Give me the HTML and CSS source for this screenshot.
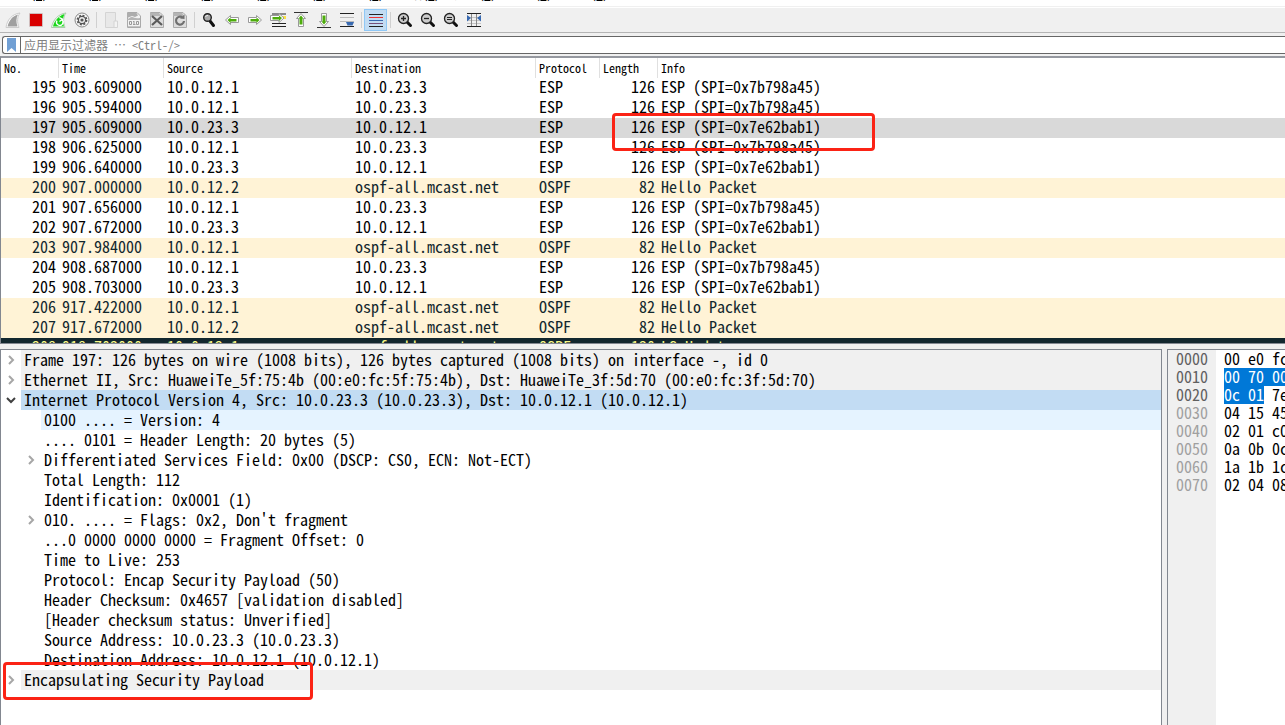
FILE: index.html
```html
<!DOCTYPE html>
<html lang="zh-CN">
<head>
<meta charset="utf-8">
<title>Wireshark</title>
<link rel="stylesheet" href="styles.css">
</head>
<body>
<nav class="menubar" aria-label="菜单">
  <button>文件(<u>F</u>)</button><button>编辑(<u>E</u>)</button><button>视图(<u>V</u>)</button><button>跳转(<u>G</u>)</button><button>捕获(<u>C</u>)</button><button>分析(<u>A</u>)</button><button>统计(<u>S</u>)</button><button>电话(<u>Y</u>)</button><button>无线(<u>W</u>)</button><button>工具(<u>T</u>)</button><button>帮助(<u>H</u>)</button>
</nav>

<div class="toolbar" role="toolbar">
  <button class="tool" aria-label="开始捕获"><svg viewBox="0 0 16 16"><path d="M1 15.500C2 8 7 2 15 1C12 5 12 10 14 15.500Z" fill="#fff" stroke="#ccc"/><path d="M2.500 14.500C4 8.500 7.500 4 13 2.500C11 6 11 10 12.500 14.500Z" fill="#a0a0a0"/></svg></button>
  <button class="tool" aria-label="停止捕获"><svg viewBox="0 0 16 16"><path d="M1.500 1.500H14.500V14.500H1.500Z" fill="#fff" stroke="#d0bcbc"/><path d="M2 2H14V14H2Z" fill="#d90000"/></svg></button>
  <button class="tool" aria-label="重新开始"><svg viewBox="0 0 16 16"><path d="M0.500 15.500C2 8 7 2 15 1C12 5 12 10 14 15.500Z" fill="#fff" stroke="#a9cba9"/><path d="M2 14.500C3.500 8.500 7.500 4 13.500 2C11.500 6 11.500 10 13 14.500Z" fill="#19d619"/><path d="M10.500 7.500A3.200 3.200 0 1 1 6 8.700M8.300 5.500L11.500 7.200L8.500 9.500" fill="none" stroke="#fff" stroke-width="1.400"/></svg></button>
  <button class="tool" aria-label="捕获选项"><svg viewBox="0 0 16 16"><circle cx="8" cy="8" r="7" fill="#f8f8f8" stroke="#888"/><circle cx="8" cy="8" r="4.200" fill="#555"/><circle cx="8" cy="8" r="4.600" fill="none" stroke="#555" stroke-width="1.600" stroke-dasharray="2 1.610"/><circle cx="8" cy="8" r="2.300" fill="#555" stroke="#eee" stroke-width="1.400"/></svg></button>
  <i class="sep"></i>
  <button class="tool" aria-label="打开"><svg viewBox="0 0 16 16"><path d="M2.500 .5H12.500V15.500H2.500Z" fill="#e8e8e8" stroke="#d4d4d4"/><path d="M11 9H14.500V15.500H11Z" fill="#f3f3f3" stroke="#d4d4d4"/></svg></button>
  <button class="tool" aria-label="保存"><svg viewBox="0 0 16 16"><path d="M1.500 .5H11L14.500 4V15.500H1.500Z" fill="#f2f2f2" stroke="#aaa"/><path d="M1 1H10.500L12 3.500L9 5L6 4L1 6Z" fill="#adadad"/><path d="M1 8V7C3 7 4 5 6 5C8 5 9 7 14 6V8Z" fill="#b5b5b5"/><g fill="none" stroke="#999"><path d="M3.500 9.500H5.500V12.500H3.500ZM8 9V13M7 9.500H8M7 12.500H9.500M10.500 9.500H12.500V12.500H10.500Z"/></g><path d="M2 14.500H14" stroke="#c4c4c4"/></svg></button>
  <button class="tool" aria-label="关闭"><svg viewBox="0 0 16 16"><path d="M1.500 .5H11L14.500 4V15.500H1.500Z" fill="#ddd" stroke="#aaa"/><path d="M1 1H10L12 4H1Z" fill="#b5b5b5"/><path d="M3 4L13 13M13 4L3 13" stroke="#5c5c5c" stroke-width="2.200"/></svg></button>
  <button class="tool" aria-label="重新载入"><svg viewBox="0 0 16 16"><path d="M1.500 .5H11L14.500 4V15.500H1.500Z" fill="#ddd" stroke="#aaa"/><path d="M1 1H10L12 4H1Z" fill="#b5b5b5"/><path d="M10.500 5.500A4 4 0 1 0 12 9" fill="none" stroke="#707070" stroke-width="2.200"/><path d="M8 6.500L12.500 7V2.500Z" fill="#707070"/></svg></button>
  <i class="sep"></i>
  <button class="tool" aria-label="查找"><svg viewBox="0 0 16 16"><path d="M9 9L12.500 13.500" stroke="#111" stroke-width="3" stroke-linecap="round"/><circle cx="6.500" cy="5.500" r="3.800" fill="#aaa" stroke="#222" stroke-width="1.400"/><path d="M4.500 5A2.200 2.200 0 0 1 7 3.500" fill="none" stroke="#eee"/></svg></button>
  <button class="tool" aria-label="上一个"><svg viewBox="0 0 16 16"><path d="M1.500 8L6.500 3.500V5.500H14.500V10.500H6.500V12.500Z" fill="#fff" stroke="#999"/><path d="M3.500 8L6.500 5.500V7H12.500V9.500H6.500V11Z" fill="#4dac0c"/></svg></button>
  <button class="tool" aria-label="下一个"><svg viewBox="0 0 16 16"><path d="M14.500 8L9.500 3.500V5.500H1.500V10.500H9.500V12.500Z" fill="#fff" stroke="#999"/><path d="M12.500 8L9.500 5.500V7H3.500V9.500H9.500V11Z" fill="#4dac0c"/></svg></button>
  <button class="tool" aria-label="转到分组"><svg viewBox="0 0 16 16"><path d="M2 2H16M2 11.500H16M2 14.500H16" stroke="#222"/><path d="M12 4H16V7H12Z" fill="#fce242"/><path d="M14 6L9 1.500V3.500H.5V8.500H9V10.500Z" fill="#fff" stroke="#999"/><path d="M12 6L9 3.500V5H2.500V7.500H9V9Z" fill="#4dac0c"/></svg></button>
  <button class="tool" aria-label="首个分组"><svg viewBox="0 0 16 16"><path d="M1 .5H15" stroke="#333"/><path d="M8 1.500L12.500 6.500H10.500V14.500H5.500V6.500H3.500Z" fill="#fff" stroke="#999"/><path d="M8 3.500L10.500 6.500H9.500V12.500H6.500V6.500H5.500Z" fill="#4dac0c"/></svg></button>
  <button class="tool" aria-label="最新分组"><svg viewBox="0 0 16 16"><path d="M1 15.500H15" stroke="#333"/><path d="M8 14.500L12.500 9.500H10.500V1.500H5.500V9.500H3.500Z" fill="#fff" stroke="#999"/><path d="M8 12.500L10.500 9.500H9.500V3.500H6.500V9.500H5.500Z" fill="#4dac0c"/></svg></button>
  <button class="tool" aria-label="自动滚动"><svg viewBox="0 0 16 16"><path d="M1 1.500H15M1 14.500H15" stroke="#222"/><path d="M1 5.500H15M1 9.500H15" stroke="#bbb"/><path d="M7 10H15L13.500 13.500H8.500Z" fill="#3869b0"/></svg></button>
  <i class="sep"></i>
  <button class="tool on" aria-label="着色" aria-pressed="true"><svg viewBox="0 0 16 16"><path d="M1 2.500H15M1 14.500H15" stroke="#222"/><path d="M1 5.500H15" stroke="#e33"/><path d="M1 8.500H15" stroke="#3869b0"/><path d="M1 11.500H15" stroke="#75507b"/></svg></button>
  <i class="sep"></i>
  <button class="tool" aria-label="放大"><svg viewBox="0 0 16 16"><path d="M10 10L13.500 13.500" stroke="#111" stroke-width="3" stroke-linecap="round"/><circle cx="6.500" cy="6.500" r="5" fill="#ccc" stroke="#222" stroke-width="1.300"/><path d="M4 6.500H9M6.500 4V9" stroke="#222" stroke-width="1.300"/></svg></button>
  <button class="tool" aria-label="缩小"><svg viewBox="0 0 16 16"><path d="M10 10L13.500 13.500" stroke="#111" stroke-width="3" stroke-linecap="round"/><circle cx="6.500" cy="6.500" r="5" fill="#ccc" stroke="#222" stroke-width="1.300"/><path d="M4 6.500H9" stroke="#222" stroke-width="1.300"/></svg></button>
  <button class="tool" aria-label="正常大小"><svg viewBox="0 0 16 16"><path d="M10 10L13.500 13.500" stroke="#111" stroke-width="3" stroke-linecap="round"/><circle cx="6.500" cy="6.500" r="5" fill="#ccc" stroke="#222" stroke-width="1.300"/><path d="M4 5.500H9M4 7.500H9" stroke="#222"/></svg></button>
  <button class="tool" aria-label="调整列宽"><svg viewBox="0 0 16 16"><path d="M1 1.500H15M1 14.500H15" stroke="#222"/><path d="M1 5.500H15M1 8.500H15M1 11.500H15" stroke="#c4c4c4"/><path d="M5.500 2V14M10.500 2V14" stroke="#888"/><path d="M1 3L5 6L1 9.500ZM15 3L11 6L15 9.500Z" fill="#3869b0"/></svg></button>
</div>

<div class="filter">
  <button class="bookmark" aria-label="书签"><svg viewBox="0 0 9 14"><path d="M0 0H9V14L4.500 10L0 14Z" fill="#709fd4"/></svg></button>
  <input type="text" aria-label="显示过滤器" placeholder="应用显示过滤器 … &lt;Ctrl-/&gt;">
</div>

<main class="panes">
  <section class="packets">
    <table>
      <colgroup><col class="c-no"><col class="c-time"><col class="c-src"><col class="c-dst"><col class="c-proto"><col class="c-len"><col></colgroup>
      <thead><tr><th>No.</th><th>Time</th><th>Source</th><th>Destination</th><th>Protocol</th><th>Length</th><th>Info</th></tr></thead>
      <tbody>
        <tr><td>195</td><td>903.609000</td><td>10.0.12.1</td><td>10.0.23.3</td><td>ESP</td><td>126</td><td>ESP (SPI=0x7b798a45)</td></tr>
        <tr><td>196</td><td>905.594000</td><td>10.0.12.1</td><td>10.0.23.3</td><td>ESP</td><td>126</td><td>ESP (SPI=0x7b798a45)</td></tr>
        <tr class="selected"><td>197</td><td>905.609000</td><td>10.0.23.3</td><td>10.0.12.1</td><td>ESP</td><td class="marked">126<span class="mark mark-packet"></span></td><td>ESP (SPI=0x7e62bab1)</td></tr>
        <tr><td>198</td><td>906.625000</td><td>10.0.12.1</td><td>10.0.23.3</td><td>ESP</td><td>126</td><td>ESP (SPI=0x7b798a45)</td></tr>
        <tr><td>199</td><td>906.640000</td><td>10.0.23.3</td><td>10.0.12.1</td><td>ESP</td><td>126</td><td>ESP (SPI=0x7e62bab1)</td></tr>
        <tr class="ospf"><td>200</td><td>907.000000</td><td>10.0.12.2</td><td>ospf-all.mcast.net</td><td>OSPF</td><td>82</td><td>Hello Packet</td></tr>
        <tr><td>201</td><td>907.656000</td><td>10.0.12.1</td><td>10.0.23.3</td><td>ESP</td><td>126</td><td>ESP (SPI=0x7b798a45)</td></tr>
        <tr><td>202</td><td>907.672000</td><td>10.0.23.3</td><td>10.0.12.1</td><td>ESP</td><td>126</td><td>ESP (SPI=0x7e62bab1)</td></tr>
        <tr class="ospf"><td>203</td><td>907.984000</td><td>10.0.12.1</td><td>ospf-all.mcast.net</td><td>OSPF</td><td>82</td><td>Hello Packet</td></tr>
        <tr><td>204</td><td>908.687000</td><td>10.0.12.1</td><td>10.0.23.3</td><td>ESP</td><td>126</td><td>ESP (SPI=0x7b798a45)</td></tr>
        <tr><td>205</td><td>908.703000</td><td>10.0.23.3</td><td>10.0.12.1</td><td>ESP</td><td>126</td><td>ESP (SPI=0x7e62bab1)</td></tr>
        <tr class="ospf"><td>206</td><td>917.422000</td><td>10.0.12.1</td><td>ospf-all.mcast.net</td><td>OSPF</td><td>82</td><td>Hello Packet</td></tr>
        <tr class="ospf"><td>207</td><td>917.672000</td><td>10.0.12.2</td><td>ospf-all.mcast.net</td><td>OSPF</td><td>82</td><td>Hello Packet</td></tr>
        <tr class="bad"><td>208</td><td>918.703000</td><td>10.0.12.1</td><td>ospf-all.mcast.net</td><td>OSPF</td><td>130</td><td>LS Update</td></tr>
      </tbody>
    </table>
  </section>

  <div class="lower">
    <section class="details">
      <ul>
        <li class="node head"><svg class="arrow" viewBox="0 0 10 10"><path d="M3 1L7 5L3 9"/></svg><span>Frame 197: 126 bytes on wire (1008 bits), 126 bytes captured (1008 bits) on interface -, id 0</span></li>
        <li class="node head"><svg class="arrow" viewBox="0 0 10 10"><path d="M3 1L7 5L3 9"/></svg><span>Ethernet II, Src: HuaweiTe_5f:75:4b (00:e0:fc:5f:75:4b), Dst: HuaweiTe_3f:5d:70 (00:e0:fc:3f:5d:70)</span></li>
        <li class="node current"><svg class="arrow open" viewBox="0 0 10 10"><path d="M1 3L5 7L9 3"/></svg><span>Internet Protocol Version 4, Src: 10.0.23.3 (10.0.23.3), Dst: 10.0.12.1 (10.0.12.1)</span></li>
        <li>
          <ul class="children">
            <li class="node hover"><span>0100 .... = Version: 4</span></li>
            <li class="node"><span>.... 0101 = Header Length: 20 bytes (5)</span></li>
            <li class="node"><svg class="arrow" viewBox="0 0 10 10"><path d="M3 1L7 5L3 9"/></svg><span>Differentiated Services Field: 0x00 (DSCP: CS0, ECN: Not-ECT)</span></li>
            <li class="node"><span>Total Length: 112</span></li>
            <li class="node"><span>Identification: 0x0001 (1)</span></li>
            <li class="node"><svg class="arrow" viewBox="0 0 10 10"><path d="M3 1L7 5L3 9"/></svg><span>010. .... = Flags: 0x2, Don't fragment</span></li>
            <li class="node"><span>...0 0000 0000 0000 = Fragment Offset: 0</span></li>
            <li class="node"><span>Time to Live: 253</span></li>
            <li class="node"><span>Protocol: Encap Security Payload (50)</span></li>
            <li class="node"><span>Header Checksum: 0x4657 [validation disabled]</span></li>
            <li class="node"><span>[Header checksum status: Unverified]</span></li>
            <li class="node"><span>Source Address: 10.0.23.3 (10.0.23.3)</span></li>
            <li class="node"><span>Destination Address: 10.0.12.1 (10.0.12.1)</span></li>
          </ul>
        </li>
        <li class="node head marked"><svg class="arrow" viewBox="0 0 10 10"><path d="M3 1L7 5L3 9"/></svg><span>Encapsulating Security Payload</span><i class="mark mark-detail"></i></li>
      </ul>
    </section>

    <section class="bytes">
      <div class="offsets"><div class="used">0000</div><div class="used">0010</div><div class="used">0020</div><div>0030</div><div>0040</div><div>0050</div><div>0060</div><div>0070</div></div>
      <div class="hex"><div>00 e0 fc</div><div><mark>00 70 00 </mark></div><div><mark>0c 01</mark> 7e</div><div>04 15 45</div><div>02 01 c0</div><div>0a 0b 0c</div><div>1a 1b 1c</div><div>02 04 08</div></div>
    </section>
  </div>
</main>
</body>
</html>
```
FILE: styles.css
```css
* { box-sizing: border-box; }

body {
  margin: 0;
  height: 100vh;
  display: flex;
  flex-direction: column;
  overflow: hidden;
  background: #f0f0f0;
  color: #000;
  font: 16px/20px "Noto Sans Mono CJK SC", "Liberation Mono", monospace;
}

button {
  border: 0;
  padding: 0;
  background: none;
  color: inherit;
  font: inherit;
}

/* Menu bar, scrolled almost out of view */
.menubar {
  flex: none;
  display: flex;
  align-items: flex-end;
  gap: 14px;
  height: 7px;
  padding: 0 6px 4px;
  overflow: hidden;
  background: #fff;
  border-bottom: 1px solid #f0f0f0;
  font-size: 12px;
  line-height: 16px;
}
.menubar button { flex: none; }

.toolbar {
  flex: none;
  display: flex;
  align-items: center;
  height: 26px;
  padding-left: 1px;
  border-top: 1px solid #fff;
  border-bottom: 1px solid #b4b4b4;
}
.tool {
  display: flex;
  align-items: center;
  justify-content: center;
  width: 23px;
  height: 22px;
  border: 1px solid transparent;
}
.tool svg { width: 16px; height: 16px; flex: none; }
.tool.on { background: #c2dcf3; border-color: #90c8f6; }
.sep {
  width: 1px;
  height: 16px;
  margin: 0 2px 0 3px;
  background: #d0d0d0;
}

.filter {
  flex: none;
  display: flex;
  height: 18px;
  margin: 3px 0 2px 2px;
  background: #fff;
  border: 1px solid #666;
  border-right: 0;
  border-radius: 3px 0 0 3px;
}
.bookmark {
  display: flex;
  align-items: center;
  justify-content: center;
  width: 18px;
  border-right: 1px solid #666;
}
.bookmark svg { width: 9px; height: 14px; }
.filter input {
  flex: 1;
  min-width: 0;
  border: 0;
  padding: 0 3px;
  background: none;
  font: 12px/16px "Noto Sans Mono CJK SC", monospace;
  outline: 0;
}
.filter input::placeholder { color: #808080; }

.panes {
  flex: 1;
  min-height: 0;
  display: flex;
  flex-direction: column;
  gap: 5px;
}

.packets {
  flex: 285 1 0;
  min-height: 0;
  overflow: hidden;
  background: #fff;
  border: 1px solid #828790;
  border-width: 2px 0 1px 1px;
  border-top-color: #95989f;
}
table {
  width: 100%;
  table-layout: fixed;
  border-collapse: separate;
  border-spacing: 0;
}
.c-no { width: 58px; }
.c-time { width: 105px; }
.c-src { width: 188px; }
.c-dst { width: 184px; }
.c-proto { width: 64px; }
.c-len { width: 58px; }
th, td {
  height: 20px;
  padding: 0 3px;
  text-align: left;
  vertical-align: top;
  white-space: nowrap;
}
td { line-height: 16px; }
th {
  border-right: 1px solid #e0e0e0;
  font-size: 12px;
  font-weight: 400;
}
th:last-child { border-right: 0; }
td:nth-child(1), td:nth-child(6) { text-align: right; }
.selected { background: #d9d9d9; }
.ospf { background: #fff3d6; color: #12272e; }
.bad { background: #12272e; color: #f7f787; }

/* Red annotation frames */
.marked { position: relative; }
.mark {
  position: absolute;
  z-index: 1;
  border: 3px solid #fb2315;
  border-radius: 4px;
}
.mark-packet { left: 12px; top: -5px; width: 263px; height: 38px; }
.mark-detail { left: 2px; top: -8px; width: 310px; height: 38px; }

.lower {
  flex: 376 1 0;
  min-height: 0;
  display: grid;
  grid-template-columns: minmax(0, 1162fr) minmax(0, 118fr);
  gap: 5px;
}
.details, .bytes {
  background: #fff;
  border: 1px solid #828790;
  border-bottom: 0;
  overflow: hidden;
}
.details ul { margin: 0; padding: 0; list-style: none; }
.details .children { padding-left: 20px; }
.node { display: flex; align-items: center; height: 20px; padding-left: 20px; }
.node span { flex: 1; padding: 0 0 2px 3px; white-space: pre; line-height: 18px; }
.arrow {
  width: 10px;
  height: 10px;
  margin: 0 5px 0 -15px;
  flex: none;
  fill: none;
  stroke: #a6a6a6;
  stroke-width: 2;
}
.arrow.open { stroke: #404040; }
.head span { background: #f0f0f0; }
.current span { background: #c2dcf3; }
.hover span { background: #e5f3ff; }

.bytes { display: flex; border-right: 0; line-height: 16px; }
.offsets {
  flex: none;
  padding: 0 8px;
  background: #f0f0f0;
  color: #a0a0a0;
}
.offsets .used { color: #606060; }
.hex { padding-left: 8px; white-space: pre; }
.hex div, .offsets div { height: 18px; }
mark { display: inline-block; height: 18px; background: #0078d7; color: #fff; }
```
